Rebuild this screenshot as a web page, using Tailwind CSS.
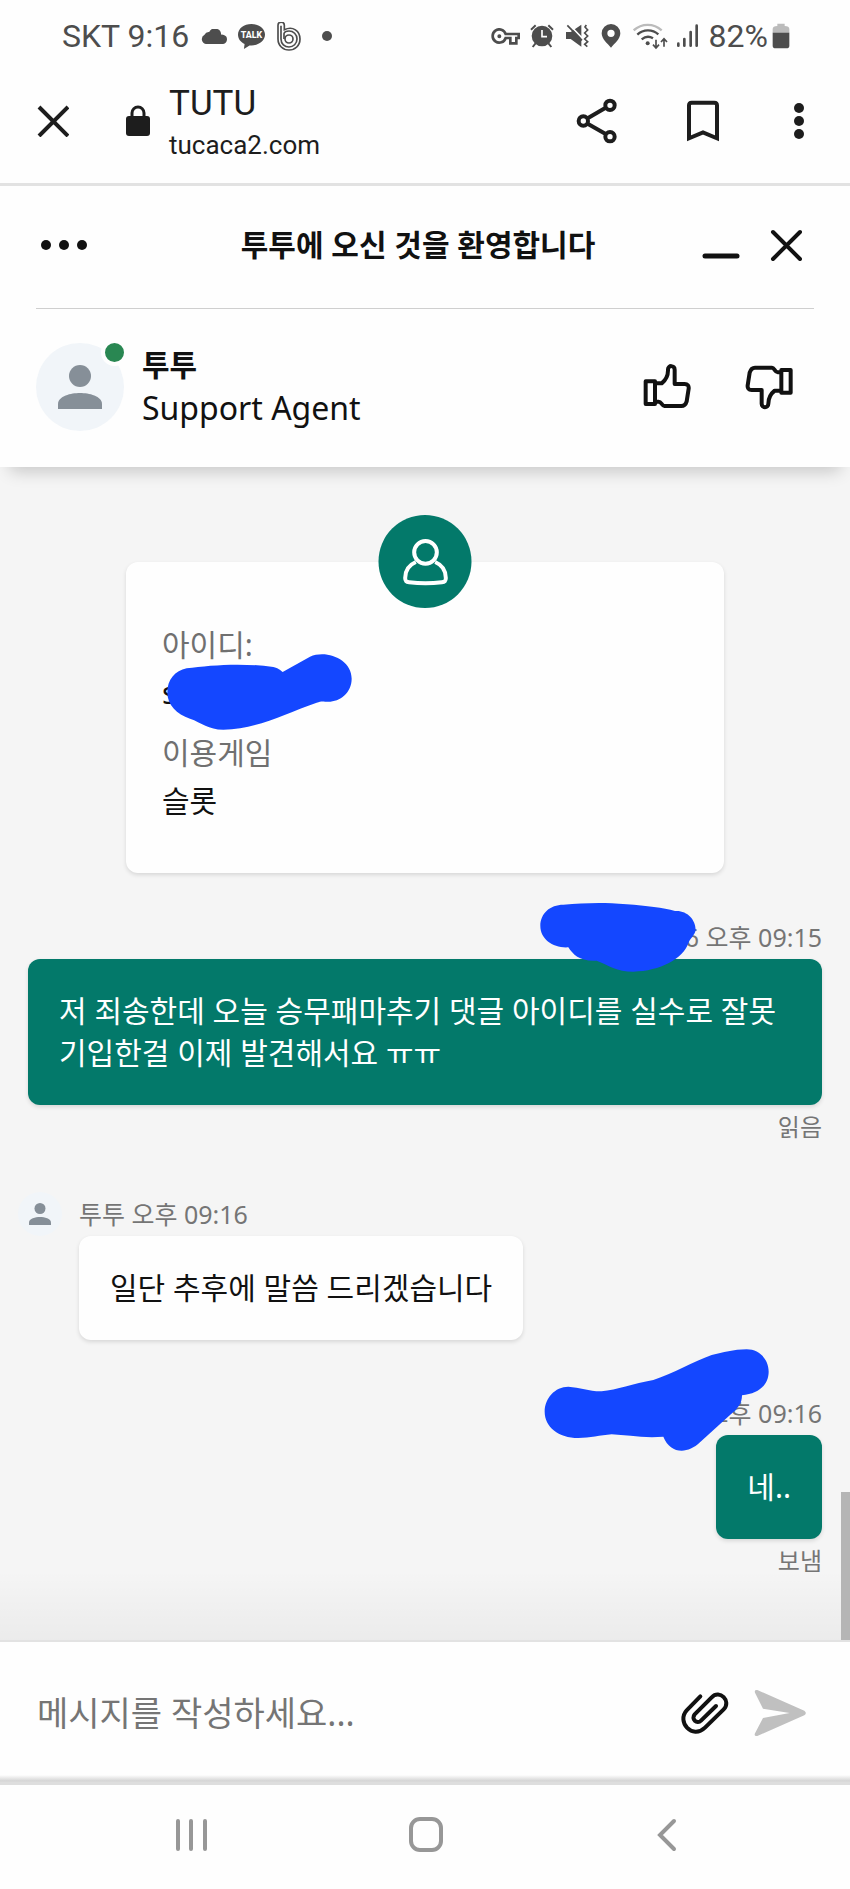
<!DOCTYPE html>
<html lang="ko">
<head>
<meta charset="utf-8">
<meta name="viewport" content="width=device-width, initial-scale=1">
<title>TUTU</title>
<script src="https://cdn.jsdelivr.net/npm/@tailwindcss/browser@4"></script>
</head>
<body class="flex min-h-screen flex-col bg-[#fefefe] font-['Noto_Sans','Noto_Sans_CJK_KR',sans-serif] text-[30px] leading-[42px] text-[#111]">

<!-- Phone status bar -->
<div class="flex h-[72px] items-center justify-between pr-[60px] pl-[62px] font-['Roboto',sans-serif] text-[32px] text-[#4d4d4d]">
  <div class="flex items-center">
    <span class="whitespace-pre">SKT 9:16</span>
    <svg class="ml-3 h-[15px] w-[27px]" viewBox="604 84 80 45" fill="currentColor"><path d="M618 129a15 15 0 0 1-4-28 14 14 0 0 1 14-8 19 19 0 0 1 36 8 14 14 0 0 1 8 1 14 14 0 0 1-2 27z"/></svg>
    <svg class="ml-[10px] h-[27px] w-[27px]" viewBox="713 68 82 82"><path fill="currentColor" d="M754 71c23 0 41 14 41 32s-18 33-41 33l-6 0-17 11 2-15c-12-6-20-16-20-29 0-18 18-32 41-32z"/><text x="754" y="115" text-anchor="middle" font-family="Roboto" font-weight="800" font-size="27" fill="#fff">TALK</text></svg>
    <svg class="ml-3 h-[29px] w-[24px]" viewBox="829 65 72 87" fill="none" stroke="currentColor" stroke-width="5"><path d="M832 75a9 9 0 0 1 19 0v13c26-12 47 4 47 28 0 20-15 33-33 33s-33-13-33-33z"/><path d="M841 76v40c0 15 11 24 24 24s24-10 24-24-11-24-24-24c-9 0-14 4-15 8v16"/><circle cx="865" cy="116" r="12"/></svg>
    <span class="ml-[21px] size-[10px] rounded-full bg-[#4d4d4d]"></span>
  </div>
  <div class="flex items-center">
    <svg class="h-[17px] w-[29px]" viewBox="200 86 87 51" fill="none" stroke="currentColor" stroke-width="8"><path d="M244 104h39v12h-7v16h-18v-16h-14a20 20 0 1 1 0-12z"/><circle cx="225" cy="111" r="3" stroke-width="6"/></svg>
    <svg class="ml-[10px] h-[24px] w-[24px]" viewBox="319 75 72 72" fill="none" stroke="currentColor"><circle cx="355" cy="111" r="31" fill="currentColor" stroke="none"/><path stroke-width="6" d="M322 92l14-13M388 92l-14-13M335 134l-8 10M375 134l8 10"/><path stroke="#fff" stroke-width="5" d="M355 93v20h15"/></svg>
    <svg class="ml-[11px] h-[24px] w-[24px]" viewBox="426 75 72 72" fill="none" stroke="currentColor"><path fill="currentColor" stroke="none" d="M429 99h14l32-22v66l-32-23h-14z"/><path stroke="#fefefe" stroke-width="5" d="M437 75l42 44"/><path stroke-width="5" d="M433 79l44 45M490 78l-4 6 8 9-9 9 9 9-9 9 9 8-9 8 8 7"/></svg>
    <svg class="ml-3 h-[24px] w-[20px]" viewBox="535 75 60 72" fill="currentColor" fill-rule="evenodd"><path d="M565 75a28 28 0 0 1 28 28c0 17-17 30-28 43-11-13-28-26-28-43a28 28 0 0 1 28-28zm0 17a11 11 0 1 0 0 22 11 11 0 0 0 0-22z"/></svg>
    <svg class="ml-3 h-[27px] w-[35px]" viewBox="630 69 105 81" fill="none" stroke="currentColor" stroke-width="7"><path stroke="#bbb" d="M632 91c24-22 60-22 84 0"/><path d="M643 104c18-17 45-17 63-1M656 118c11-9 23-10 34-3"/><circle cx="674" cy="130" r="6" fill="currentColor" stroke="none"/><path stroke-width="5" d="M699 119v25m-9-10 9 10 9-10M723 140v-24m-9 10 9-10 9 10"/></svg>
    <svg class="ml-2 h-[24px] w-[23px]" viewBox="755 75 69 72" stroke="currentColor" stroke-width="8" stroke-linecap="round"><path d="M762 134v6M780 120v20M799 99v41M817 80v60"/></svg>
    <span class="ml-[10px]">82%</span>
    <svg class="ml-1 h-[26px] w-[18px]" viewBox="1042 70 54 78"><path fill="#bbb" d="M1058 72h22v7q14 0 14 9v12h-50v-12q0-9 14-9z"/><path fill="currentColor" d="M1044 99h50v39q0 8-9 8h-32q-9 0-9-8z"/></svg>
  </div>
</div>

<!-- In-app browser toolbar -->
<header class="flex h-[114px] items-center border-b-3 border-[#e2e2e2] pr-[44px] pb-[13px] pl-[37px] font-['Roboto',sans-serif] text-[#1d1d1d]">
  <button class="flex" aria-label="닫기"><svg class="size-8" viewBox="0 0 32 32" fill="none" stroke="currentColor" stroke-width="4"><path d="M2 2l29 29M31 2L2 31"/></svg></button>
  <svg class="ml-[56px] h-8 w-[26px]" viewBox="0 0 26 32" fill="none"><rect x="1" y="11" width="24" height="20" rx="3" fill="currentColor"/><path d="M7 12V8a6 6 0 0 1 12 0v4" stroke="currentColor" stroke-width="3"/></svg>
  <div class="ml-[18px] flex-1 pt-[5px]">
    <div class="text-[35px] leading-[42px]">TUTU</div>
    <div class="text-[26px] leading-[40px]">tucaca2.com</div>
  </div>
  <div class="flex items-center">
    <button class="flex" aria-label="공유"><svg class="h-[46px] w-[42px]" viewBox="453 295 126 138" fill="none" stroke="currentColor" stroke-width="12"><circle cx="555" cy="317" r="14"/><circle cx="475" cy="364" r="14"/><circle cx="555" cy="411" r="14"/><path d="M488 356l54-32M488 372l54 31"/></svg></button>
    <button class="ml-[68px] flex" aria-label="북마크"><svg class="h-[42px] w-[34px]" viewBox="785 300 102 126" fill="none" stroke="currentColor" stroke-width="12"><path d="M794 415V316q0-8 8-8h68q8 0 8 8v99l-42-18z"/></svg></button>
    <button class="ml-[72px] flex" aria-label="더보기"><svg class="h-[38px] w-[14px]" viewBox="0 0 14 38" fill="currentColor"><circle cx="7" cy="6" r="5"/><circle cx="7" cy="19" r="5"/><circle cx="7" cy="32" r="5"/></svg></button>
  </div>
</header>

<!-- Chat widget header -->
<section class="relative z-10 bg-[#fefefe] px-9 shadow-[0_14px_16px_-10px_rgba(0,0,0,0.2)]">
  <div class="flex h-[123px] items-center justify-between border-b border-[#cfcfcf] pr-[12px] pb-1">
    <button class="flex w-[98px] pl-1" aria-label="메뉴"><svg class="h-3 w-[48px]" viewBox="0 0 48 12" fill="currentColor"><circle cx="6" cy="6" r="5"/><circle cx="24" cy="6" r="5"/><circle cx="42" cy="6" r="5"/></svg></button>
    <h1 class="font-bold">투투에 오신 것을 환영합니다</h1>
    <div class="flex items-center gap-[30px]">
      <button class="flex" aria-label="최소화"><svg class="h-9 w-[38px]" viewBox="0 0 38 36" stroke="currentColor" stroke-width="5" stroke-linecap="round"><path d="M3 29h32"/></svg></button>
      <button class="flex" aria-label="채팅 닫기"><svg class="size-8" viewBox="0 0 32 32" stroke="currentColor" stroke-width="4" stroke-linecap="round"><path d="M3 3l27 27M30 3L3 30"/></svg></button>
    </div>
  </div>
  <div class="flex h-[158px] items-center pr-[21px] pb-[3px]">
    <div class="relative flex size-[88px] items-center justify-center rounded-full bg-[#f1f5f9]">
      <svg class="size-[44px]" viewBox="0 0 44 44" fill="#868f98"><circle cx="22" cy="11" r="11"/><path d="M0 44v-5c0-8 13-11 22-11s22 3 22 11v5z"/></svg>
      <span class="absolute -top-1 -right-1 size-[27px] rounded-full border-4 border-[#fefefe] bg-[#298752]"></span>
    </div>
    <div class="ml-[18px] flex-1">
      <div class="font-bold">투투</div>
      <div class="text-[32px] leading-[44px]">Support Agent</div>
    </div>
    <button class="flex" aria-label="좋아요"><svg class="size-12" viewBox="654 522 144 144" fill="none" stroke="currentColor" stroke-width="12" stroke-linejoin="round"><path d="M662 577h28v68h-28zM690 583h20c10-8 20-18 19-42 0-13 20-13 20 1v43h30c9 0 13 5 12 14l-6 38c-3 10-8 14-16 14h-51c-7 0-9-13-17-13h-11"/></svg></button>
    <button class="ml-[54px] flex" aria-label="싫어요"><svg class="size-12" viewBox="961 524 144 144" fill="none" stroke="currentColor" stroke-width="12" stroke-linejoin="round"><path d="M1098 545h-28v68h28zM1070 607h-20c-10 8-19 18-19 39 0 14-20 14-20 0v-41h-30c-9 0-13-5-12-14l6-38c3-10 8-15 16-15h51c7 0 9 14 17 14h11"/></svg></button>
  </div>
</section>

<!-- Conversation -->
<main class="relative flex flex-1 flex-col bg-[#f5f5f5] px-7 pt-[95px] pb-[60px]">
  <div class="relative mx-[98px] rounded-xl bg-[#fefefe] px-9 pt-[62px] pb-[51px] shadow-[0_2px_4px_rgba(0,0,0,0.12)]">
    <div class="absolute -top-[47px] left-1/2 flex size-[93px] -translate-x-1/2 items-center justify-center rounded-full bg-[#03796a]">
      <svg class="size-12" viewBox="874 140 144 144" fill="none" stroke="#fff" stroke-width="12"><circle cx="946" cy="183" r="34"/><path d="M917 212c-21 9-32 25-32 48 0 10 4 12 12 13 32 4 66 4 98 0 8-1 12-3 12-13 0-23-11-39-32-48" stroke-linejoin="round"/></svg>
    </div>
    <dl>
      <dt class="text-[#707070]">아이디:</dt>
      <dd class="mt-[6px]">s</dd>
      <dt class="mt-[18px] text-[#707070]">이용게임</dt>
      <dd class="mt-[6px]">슬롯</dd>
    </dl>
    <svg class="absolute top-[91px] left-[40px] h-[78px] w-[188px]" viewBox="168 486 564 234" fill="#1447ff"><path d="M172 605C172 565 195 540 230 532C300 522 400 515 490 528C505 531 510 537 518 543L600 497C650 475 725 505 725 563C725 605 690 632 655 632C640 632 635 629 620 635C520 670 440 715 340 716C295 716 275 695 240 683C200 670 172 640 172 605Z"/></svg>
  </div>

  <div class="relative mt-[46px] flex flex-col items-end gap-1">
    <div class="text-[25px] leading-9 text-[#757575]">6 오후 09:15</div>
    <div class="rounded-xl bg-[#03796a] px-[31px] py-[31px] text-white shadow-[0_2px_4px_rgba(0,0,0,0.12)]">저 죄송한데 오늘 승무패마추기 댓글 아이디를 실수로 잘못 기입한걸 이제 발견해서요 ㅠㅠ</div>
    <div class="text-[24px] leading-9 text-[#757575]">읽음</div>
    <svg class="absolute -top-[17px] right-[125px] h-[70px] w-[157px]" viewBox="120 66 471 210" fill="#1447ff"><path d="M121 138C121 100 150 74 190 74C250 70 300 66 380 73C440 77 490 84 525 93C560 90 587 118 587 150C585 165 570 175 565 190C550 235 480 274 400 275C350 275 325 255 290 242C240 245 220 225 205 202C160 205 121 178 121 138Z"/></svg>
  </div>

  <div class="mt-[51px] flex items-start">
    <div class="-ml-[10px] flex size-[44px] shrink-0 -translate-y-1 items-center justify-center rounded-full bg-[#f1f5f9]">
      <svg class="size-[22px]" viewBox="0 0 44 44" fill="#868f98"><circle cx="22" cy="11" r="11"/><path d="M0 44v-5c0-8 13-11 22-11s22 3 22 11v5z"/></svg>
    </div>
    <div class="ml-[17px] flex flex-col items-start gap-1">
      <div class="text-[25px] leading-9 text-[#757575]">투투 오후 09:16</div>
      <div class="rounded-xl bg-[#fefefe] px-[31px] py-[31px] shadow-[0_2px_4px_rgba(0,0,0,0.12)]">일단 추후에 말씀 드리겠습니다</div>
    </div>
  </div>

  <div class="relative mt-[55px] flex flex-col items-end gap-1">
    <div class="text-[25px] leading-9 text-[#757575]">오후 09:16</div>
    <div class="rounded-xl bg-[#03796a] px-[31px] py-[31px] text-white shadow-[0_2px_4px_rgba(0,0,0,0.12)]">네..</div>
    <div class="text-[24px] leading-9 text-[#757575]">보냄</div>
    <svg class="absolute -top-[46px] right-[53px] h-[103px] w-[225px]" viewBox="132 87 675 309" fill="#1447ff"><path d="M134 275C134 235 165 200 205 200C240 202 270 215 305 214C350 210 400 190 460 180C520 160 580 125 635 105C670 98 700 88 740 88C780 88 806 120 806 155C806 195 775 222 726 226C726 250 715 265 690 285L600 367C560 405 510 400 490 350C430 355 380 345 335 343C300 346 270 354 235 354C175 354 134 320 134 275Z"/></svg>
  </div>

  <div class="pointer-events-none absolute inset-x-0 bottom-0 h-[70px] bg-linear-to-b from-transparent to-black/4"></div>
  <div class="absolute right-0 bottom-0 h-[148px] w-[9px] bg-[#b5b5b5]"></div>
</main>

<!-- Message composer -->
<form class="flex h-[145px] items-center border-t-2 border-[#e2e2e2] bg-[linear-gradient(to_top,#dedede_3px,#d4d4d4_4px,#fefefe_10px)] pr-[43px] pb-[1px] pl-[37px]">
  <input class="min-w-0 flex-1 text-[34px] leading-[48px] outline-none placeholder:text-[#757575]" type="text" aria-label="메시지" placeholder="메시지를 작성하세요...">
  <button class="flex" type="button" aria-label="파일 첨부"><svg class="h-[44px] w-[50px]" viewBox="765 216 150 132" fill="none" stroke="#111" stroke-width="12" stroke-linecap="round" stroke-linejoin="round"><path d="M826 232l-41 42c-31 34 17 89 55 52l56-55c24-24-12-61-36-36l-51 51c-12 14 7 31 19 19l45-44"/></svg></button>
  <button class="ml-6 flex" type="submit" aria-label="보내기"><svg class="h-[48px] w-[53px]" viewBox="987 208 159 144" fill="#c0c0c0"><path d="M997 211l141 62q9 7 0 14l-141 62q-11 2-7-8l24-46 80-15-80-13-24-48q-3-9 7-8z"/></svg></button>
</form>

<!-- Android navigation -->
<nav class="grid h-[104px] grid-cols-[1fr_auto_1fr] items-center pr-[173px] pb-1 pl-[174px] text-[#979797]">
  <button class="flex justify-self-start" aria-label="최근 앱"><svg class="h-9 w-[35px]" viewBox="0 0 35 36" stroke="currentColor" stroke-width="4" stroke-linecap="round"><path d="M4 4v28M17 4v28M31 4v28"/></svg></button>
  <button class="flex" aria-label="홈"><svg class="h-9 w-[34px]" viewBox="0 0 34 36" fill="none" stroke="currentColor" stroke-width="4"><rect x="2" y="2" width="30" height="31" rx="9"/></svg></button>
  <button class="flex justify-self-end" aria-label="뒤로"><svg class="h-9 w-5" viewBox="0 0 20 36" fill="none" stroke="currentColor" stroke-width="4" stroke-linecap="round"><path d="M17 4L3 18l14 14"/></svg></button>
</nav>
</body>
</html>
